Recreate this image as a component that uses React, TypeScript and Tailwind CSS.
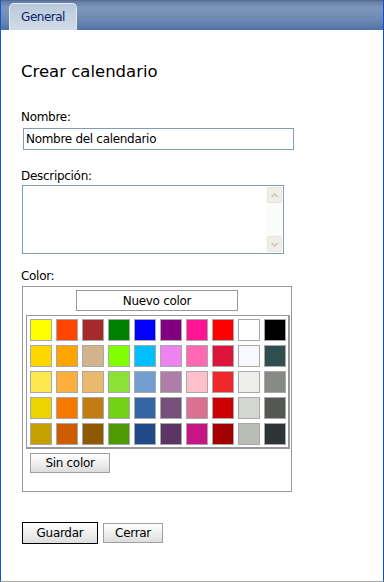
import React from "react";

const rows: string[][] = [
  ["#ffff00", "#ff4500", "#a52a2a", "#008000", "#0000ff", "#800080", "#ff1493", "#ff0000", "#ffffff", "#000000"],
  ["#ffd700", "#ffa500", "#d2b48c", "#7fff00", "#00bfff", "#ee82ee", "#ff69b4", "#dc143c", "#f8f8ff", "#2f4f4f"],
  ["#fce94f", "#fcaf3e", "#e9b96e", "#8ae234", "#729fcf", "#ad7fa8", "#ffc0cb", "#ef2929", "#eeeeec", "#888a85"],
  ["#edd400", "#f57900", "#c17d11", "#73d216", "#3465a4", "#75507b", "#db7093", "#cc0000", "#d3d7cf", "#555753"],
  ["#c4a000", "#ce5c00", "#8f5902", "#4e9a06", "#204a87", "#5c3566", "#c71585", "#a40000", "#babdb6", "#2e3436"],
];

export default function App() {
  return (
    <div
      className="w-[384px] h-[582px] bg-white border-l border-r border-b border-l-[#0a5ad8] border-r-[#0b4fd9] border-b-[#a8a8a0] flex flex-col text-[12px] tracking-[-0.3px] text-black"
      style={{ fontFamily: '"DejaVu Sans", Verdana, sans-serif' }}
    >
      {/* Header with tab */}
      <div className="h-[30px] flex items-end pl-2 bg-[linear-gradient(to_bottom,#4f6690_0px,#6a82a8_2px,#7d96ba_8px,#6d88b2_20px,#5173a6_30px)]">
        <div className="w-[68px] h-[27px] rounded-t-[5px] border border-b-0 border-[#e4ebf3] bg-[linear-gradient(to_bottom,#b8c8dc,#d2dce8)] flex items-center justify-center text-[12px] tracking-[-0.5px] text-[#0c2463] pb-[1px]">
          General
        </div>
      </div>

      <div className="flex flex-col pl-5 pt-[33px]">
        <div className="text-[16.5px] tracking-normal leading-[18px] h-[18px]">Crear calendario</div>

        <div className="mt-[30px] leading-[13px] h-[13px]">Nombre:</div>
        <div className="mt-[4px] ml-[2px] w-[271px] h-[22px] border border-[#7f9db9] flex items-center pl-[2px] leading-[13px]">
          Nombre del calendario
        </div>

        <div className="mt-[20px] leading-[13px] h-[13px]">Descripción:</div>
        <div className="mt-[2px] ml-[1px] w-[262px] h-[69px] border border-[#7f9db9] flex justify-end p-[1px]">
          <div className="w-[16px] h-full bg-[#fbfbf7] flex flex-col justify-between">
            <div className="h-[16px] w-[15px] ml-[1px] rounded-[2px] bg-[#f0efe7] border border-[#e8e6dc] flex items-center justify-center">
              <svg width="7" height="5" viewBox="0 0 7 5"><path d="M0.5 4 L3.5 1 L6.5 4" stroke="#c5c3bb" strokeWidth="1.4" fill="none" /></svg>
            </div>
            <div className="h-[16px] w-[15px] ml-[1px] rounded-[2px] bg-[#f0efe7] border border-[#e8e6dc] flex items-center justify-center">
              <svg width="7" height="5" viewBox="0 0 7 5"><path d="M0.5 1 L3.5 4 L6.5 1" stroke="#c5c3bb" strokeWidth="1.4" fill="none" /></svg>
            </div>
          </div>
        </div>

        <div className="mt-[16px] leading-[13px] h-[13px]">Color:</div>
        <div className="mt-[3px] ml-[1px] w-[270px] h-[206px] border border-[#999999] flex flex-col pl-[3px] pt-[3px]">
          <div className="ml-[50px] w-[162px] h-[21px] border border-[#999999] flex items-center justify-center">
            Nuevo color
          </div>
          <div className="mt-[4px] w-[264px] h-[134px] border border-[#999999] border-r-2 border-b-2 pl-[3px] pt-[3px] grid grid-cols-[repeat(10,22px)] gap-[4px] content-start">
            {rows.flat().map((c, i) => (
              <div key={i} className="w-[22px] h-[22px] border border-[#a8a8a8]" style={{ backgroundColor: c }} />
            ))}
          </div>
          <div className="mt-[4px] ml-[4px] w-[80px] h-[20px] border border-[#a0a0a0] bg-[linear-gradient(to_bottom,#ffffff,#ececec_60%,#dcdcdc)] flex items-center justify-center">
            Sin color
          </div>
        </div>

        <div className="mt-[30px] ml-[1px] flex gap-[5px] items-start">
          <div className="w-[76px] h-[22px] border border-black bg-[linear-gradient(to_bottom,#ffffff,#ececec_60%,#dcdcdc)] flex items-center justify-center">
            Guardar
          </div>
          <div className="mt-[1px] w-[60px] h-[20px] border border-[#a0a0a0] bg-[linear-gradient(to_bottom,#ffffff,#ececec_60%,#dcdcdc)] flex items-center justify-center">
            Cerrar
          </div>
        </div>
      </div>
    </div>
  );
}
